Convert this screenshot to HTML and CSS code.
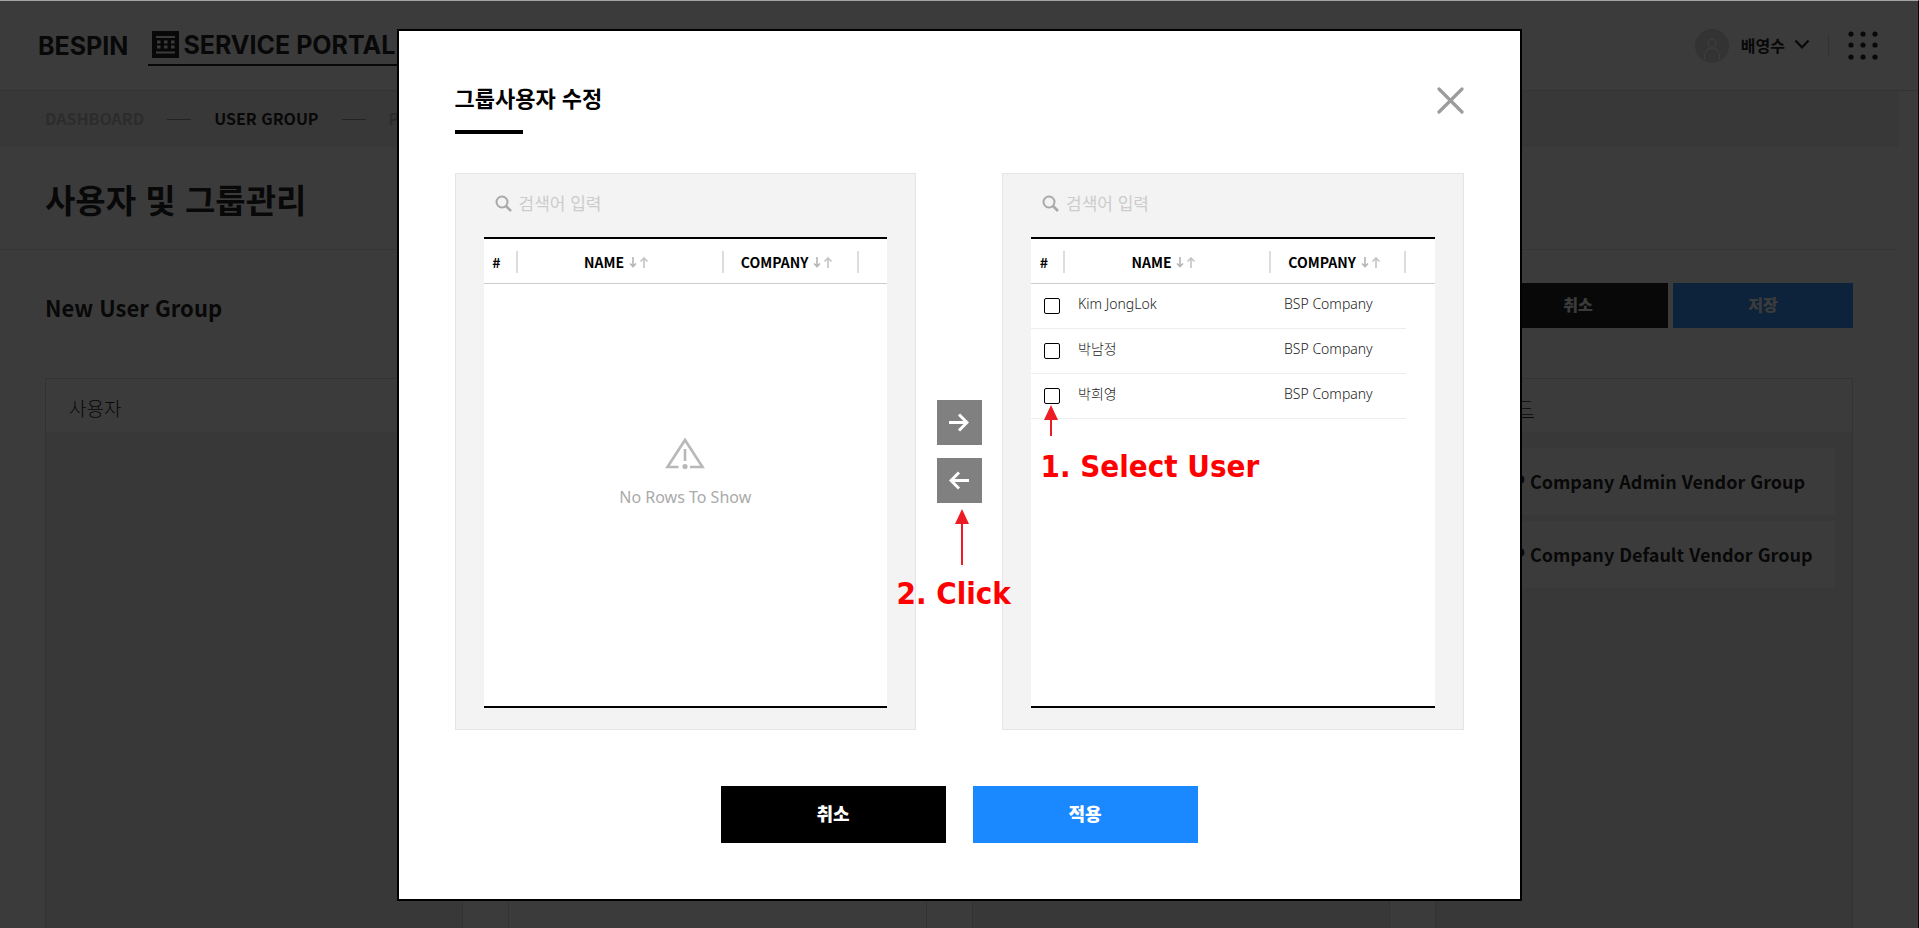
FILE: index.html
```html
<!DOCTYPE html>
<html lang="ko">
<head>
<meta charset="utf-8">
<title>사용자 및 그룹관리</title>
<meta name="viewport" content="width=device-width, initial-scale=1">
<link rel="stylesheet" href="styles.css">
</head>
<body>
<div class="page">
  <header class="header">
    <a class="brand" href="#">BESPIN</a>
    <a class="portal" href="#">
      <svg width="27" height="27" viewBox="0 0 27 27" aria-hidden="true">
        <rect width="27" height="27" fill="#000"/>
        <path d="M4 6h19M4 21.500h19" stroke="#fff" stroke-width="2"/>
        <path d="M5 11h3.500M12 11h3.500M19 11h3.500M5 16h3.500M12 16h3.500M19 16h3.500" stroke="#fff" stroke-width="3"/>
      </svg>
      <span>SERVICE PORTAL</span>
    </a>
    <div class="account">
      <svg class="avatar" width="34" height="34" viewBox="0 0 34 34" aria-hidden="true">
        <circle cx="17" cy="17" r="17" fill="#d4d4d4"/>
        <g fill="none" stroke="#fff" stroke-width="1.400"><circle cx="17" cy="14" r="4"/><path d="M9.500 31v-4.500a7.500 7.500 0 0 1 15 0V31"/></g>
      </svg>
      <button class="user" type="button">배영수
        <svg width="16" height="11" viewBox="0 0 16 11" aria-hidden="true"><path d="M1.500 1.500L8 8.500l6.500-7" fill="none" stroke="#000" stroke-width="2.200"/></svg>
      </button>
      <button class="apps" type="button" aria-label="메뉴">
        <svg width="30" height="30" viewBox="0 0 30 30" aria-hidden="true">
          <circle cx="3" cy="3" r="2.600"/><circle cx="15" cy="3" r="2.600"/><circle cx="27" cy="3" r="2.600"/>
          <circle cx="3" cy="14" r="2.600"/><circle cx="15" cy="14" r="2.600"/><circle cx="27" cy="14" r="2.600"/>
          <circle cx="3" cy="26" r="2.600"/><circle cx="15" cy="26" r="2.600"/><circle cx="27" cy="26" r="2.600"/>
        </svg>
      </button>
    </div>
  </header>
  <div class="content">
    <nav class="crumbs">
      <a href="#">DASHBOARD</a>
      <a class="current" href="#">USER GROUP</a>
      <a href="#">PROJECT</a>
    </nav>
    <h1 class="title">사용자 및 그룹관리</h1>
    <div class="toolbar">
      <h2>New User Group</h2>
      <div class="actions">
        <button class="btn" type="button">취소</button>
        <button class="btn primary" type="button">저장</button>
      </div>
    </div>
    <div class="columns">
      <section class="column"><h3>사용자</h3><div class="list"></div></section>
      <section class="column"><h3>그룹</h3><div class="list plain"></div></section>
      <section class="column"><h3>역할</h3><div class="list"></div></section>
      <section class="column"><h3><a href="#">권한 카드</a></h3>
        <div class="list">
          <div class="card">BSP Company Admin Vendor Group</div>
          <div class="card">BSP Company Default Vendor Group</div>
        </div>
      </section>
    </div>
  </div>
</div>

<div class="overlay">
  <div class="modal" role="dialog" aria-modal="true" aria-labelledby="dlg-title">
    <div class="modal-head">
      <h2 id="dlg-title">그룹사용자 수정</h2>
      <button class="close" type="button" aria-label="닫기">
        <svg width="27" height="27" viewBox="0 0 27 27" aria-hidden="true"><path d="M2 2l23 23M25 2L2 25" stroke="#9c9c9c" stroke-width="3.200" stroke-linecap="round"/></svg>
      </button>
    </div>
    <div class="picker">
      <section class="pane">
        <label class="search">
          <svg width="17" height="17" viewBox="0 0 17 17" aria-hidden="true"><g fill="none" stroke="#a9a9a9" stroke-width="2"><circle cx="7" cy="7" r="5.500"/><path d="M11 11l5 5" stroke-width="2.600"/></g></svg>
          <input type="text" placeholder="검색어 입력" aria-label="검색어 입력">
        </label>
        <div class="grid">
          <table>
            <thead><tr>
              <th class="c-num">#</th>
              <th class="c-name">NAME <svg class="sort" width="20" height="11" viewBox="0 0 20 11" aria-hidden="true"><path d="M4 0v10M1 6.500l3 3 3-3"/><path class="up" d="M15 11V1M11.500 4.500l3.500-3.500 3.500 3.500"/></svg></th>
              <th class="c-company">COMPANY <svg class="sort" width="20" height="11" viewBox="0 0 20 11" aria-hidden="true"><path d="M4 0v10M1 6.500l3 3 3-3"/><path class="up" d="M15 11V1M11.500 4.500l3.500-3.500 3.500 3.500"/></svg></th>
              <th class="c-rest"></th>
            </tr></thead>
          </table>
          <div class="empty">
            <svg width="40" height="32" viewBox="0 0 40 32" aria-hidden="true"><g fill="none" stroke="#b8b8b8" stroke-width="2.600"><path d="M13.500 30H2.500L20 3l17.500 27H25"/><path d="M20 12v12"/></g><circle cx="20" cy="29.500" r="2.600" fill="#b8b8b8"/></svg>
            <p>No Rows To Show</p>
          </div>
        </div>
      </section>
      <div class="movers">
        <button type="button" aria-label="오른쪽으로 이동"><svg width="20" height="19" viewBox="0 0 20 19" aria-hidden="true"><path d="M0 9.500h18M10 1.500l8 8-8 8"/></svg></button>
        <button type="button" aria-label="왼쪽으로 이동"><svg width="20" height="19" viewBox="0 0 20 19" aria-hidden="true"><path d="M20 9.500H2M10 1.500l-8 8 8 8"/></svg></button>
      </div>
      <section class="pane">
        <label class="search">
          <svg width="17" height="17" viewBox="0 0 17 17" aria-hidden="true"><g fill="none" stroke="#a9a9a9" stroke-width="2"><circle cx="7" cy="7" r="5.500"/><path d="M11 11l5 5" stroke-width="2.600"/></g></svg>
          <input type="text" placeholder="검색어 입력" aria-label="검색어 입력">
        </label>
        <div class="grid">
          <table>
            <thead><tr>
              <th class="c-num">#</th>
              <th class="c-name">NAME <svg class="sort" width="20" height="11" viewBox="0 0 20 11" aria-hidden="true"><path d="M4 0v10M1 6.500l3 3 3-3"/><path class="up" d="M15 11V1M11.500 4.500l3.500-3.500 3.500 3.500"/></svg></th>
              <th class="c-company">COMPANY <svg class="sort" width="20" height="11" viewBox="0 0 20 11" aria-hidden="true"><path d="M4 0v10M1 6.500l3 3 3-3"/><path class="up" d="M15 11V1M11.500 4.500l3.500-3.500 3.500 3.500"/></svg></th>
              <th class="c-rest"></th>
            </tr></thead>
            <tbody>
              <tr><td class="pick"><input type="checkbox" aria-label="Kim JongLok"></td><td>Kim JongLok</td><td>BSP Company</td><td></td></tr>
              <tr><td class="pick"><input type="checkbox" aria-label="박남정"></td><td>박남정</td><td>BSP Company</td><td></td></tr>
              <tr><td class="pick"><input type="checkbox" aria-label="박희영"></td><td>박희영</td><td>BSP Company</td><td></td></tr>
            </tbody>
          </table>
        </div>
      </section>
    </div>
    <div class="modal-foot">
      <button class="btn" type="button">취소</button>
      <button class="btn primary" type="button">적용</button>
    </div>
    <div class="note note-select">
      <svg width="16" height="32" viewBox="0 0 16 32" aria-hidden="true"><path d="M8 0l7 15H9v16H7V15H1z" fill="#ed1c24"/></svg>
      <span>1. Select User</span>
    </div>
    <div class="note note-click">
      <svg width="16" height="56" viewBox="0 0 16 56" aria-hidden="true"><path d="M8 0l7 15H9v41H7V15H1z" fill="#ed1c24"/></svg>
      <span>2. Click</span>
    </div>
  </div>
</div>
</body>
</html>
```
FILE: styles.css
```css
* { box-sizing: border-box; }
html, body { margin: 0; height: 100%; overflow: hidden; }
body { font-family: "Noto Sans CJK KR", sans-serif; color: #000; background: #fff; font-size: 16px; }
h1, h2, h3, p { margin: 0; }
a { color: inherit; text-decoration: none; }
button { font: inherit; color: inherit; border: 0; padding: 0; background: none; cursor: pointer; }
svg { display: block; }

.page { display: flex; flex-direction: column; height: 100%; padding-top: 1px; }
.header { display: flex; align-items: center; height: 90px; padding: 0 41px 0 38px; border-bottom: 1px solid #d4d4d4; }
.brand, .portal { font-family: Inter, sans-serif; font-weight: 700; font-size: 25px; line-height: 28px; white-space: nowrap; }
.portal { display: flex; align-items: center; gap: 4px; margin-left: 20px; padding: 5px 12px 5px 4px; border-bottom: 2px solid #000; }
.account { display: flex; align-items: center; margin-left: auto; }
.user { display: flex; align-items: center; gap: 9px; height: 22px; margin-left: 12px; padding: 0 18px 2px 0; border-right: 1px solid #d0d0d0; font-weight: 700; }
.apps { margin-left: 19px; }

.content { display: flex; flex-direction: column; flex: 1; margin-right: 21px; min-height: 0; }
.crumbs { display: flex; align-items: center; height: 56px; padding: 0 45px 2px; background: #eee; font-weight: 700; color: #b4b4b4; }
.crumbs .current { color: #000; }
.crumbs a + a::before { content: ""; display: inline-block; width: 24px; height: 1px; margin: 0 23px; vertical-align: 5px; background: #888; }
.title { padding: 27px 45px 0; height: 103px; border-bottom: 1px solid #e0e0e0; font-size: 33px; line-height: 50px; font-weight: 700; }
.toolbar { display: flex; justify-content: space-between; align-items: flex-start; padding: 33px 45px 0; }
.toolbar h2 { padding-top: 3px; font-size: 22px; line-height: 42px; font-weight: 700; }
.actions { display: flex; gap: 5px; }
.btn { padding-bottom: 3px; background: #000; color: #fff; font-weight: 900; }
.btn.primary { background: #1a88ff; }
.actions .btn { width: 180px; height: 45px; }
.columns { display: grid; grid-template-columns: repeat(4, 1fr); gap: 45px; flex: 1; padding: 50px 45px 0; }
.column { display: flex; flex-direction: column; border: 1px solid #d8d8d8; border-bottom: 0; }
.column h3 { padding: 6px 23px 0; height: 53px; font-size: 19px; line-height: 45px; font-weight: 300; }
.column h3 a { text-decoration: underline; text-decoration-thickness: 1px; text-underline-offset: 1px; }
.list { display: flex; flex-direction: column; gap: 6px; flex: 1; padding: 16px 17px; background: #f0f0f0; }
.list.plain { background: #fff; }
.card { height: 67px; padding-left: 37px; background: #fff; font-size: 18px; line-height: 67px; font-weight: 700; white-space: nowrap; }

.overlay { position: fixed; inset: 0; display: flex; justify-content: center; align-items: flex-start; padding-top: 28px; background: rgba(10, 10, 10, .8); border-top: 1px solid #a5a5a5; border-right: 1px solid #000; }
.modal { position: relative; width: 1125px; max-width: 96%; padding: 48px 56px 56px; border: 2px solid #000; background: #fff; }
.modal-head { display: flex; justify-content: space-between; align-items: flex-start; }
.modal-head h2 { font-size: 22px; line-height: 36px; font-weight: 700; }
.modal-head h2::after { content: ""; display: block; width: 68px; height: 4px; margin-top: 15px; background: #000; }
.close { margin-top: 8px; }
.picker { display: grid; grid-template-columns: 1fr 86px 1fr; margin-top: 39px; }
.pane { padding: 9px 28px 21px; border: 1px solid #e5e5e5; background: #f3f3f3; }
.search { display: flex; align-items: center; gap: 7px; height: 40px; padding-left: 11px; margin-bottom: 14px; }
.search input { flex: 1; min-width: 0; border: 0; padding: 0 0 2px; outline: 0; background: none; font: inherit; font-size: 17px; }
.search input::placeholder { color: #ccc; opacity: 1; }
.grid { display: flex; flex-direction: column; min-height: 471px; border-top: 2px solid #000; border-bottom: 2px solid #000; background: #fff; }
table { width: 100%; border-collapse: collapse; table-layout: fixed; font-size: 14px; }
th { position: relative; height: 44px; padding: 2px 8px 0 0; border-bottom: 1px solid #ccc; font-weight: 700; line-height: 20px; }
th:not(.c-rest)::after { content: ""; position: absolute; right: 0; top: 12px; width: 2px; height: 22px; background: #ddd; }
.c-num { width: 34px; }
.c-name { width: 206px; }
.c-company { width: 135px; }
.sort { display: inline-block; margin-left: 1px; fill: none; stroke: #b5b5b5; stroke-width: 1.6; }
.sort .up { stroke: #c4c4c4; }
td { height: 45px; padding: 0 13px 4px; border-bottom: 1px solid #eee; font-family: "Noto Sans", "Noto Sans CJK KR", sans-serif; font-weight: 300; line-height: 20px; color: #222; }
td:last-child { border-bottom: 0; }
.pick { padding: 0 0 0 13px; }
.pick input { display: block; appearance: none; width: 16px; height: 16px; margin: 0; border: 1px solid #000; border-radius: 2px; background: #fff; }
.empty { display: flex; flex-direction: column; align-items: center; justify-content: center; flex: 1; gap: 16px; padding-bottom: 44px; color: #aaa; font-family: "Noto Sans", sans-serif; line-height: 24px; }
.movers { display: flex; flex-direction: column; align-items: center; justify-content: center; gap: 13px; padding-bottom: 1px; }
.movers button { display: flex; align-items: center; justify-content: center; width: 45px; height: 45px; background: #808080; }
.movers svg { fill: none; stroke: #fff; stroke-width: 3; }
.modal-foot { display: flex; justify-content: center; gap: 27px; margin-top: 56px; }
.modal-foot .btn { width: 225px; height: 57px; font-size: 18px; }
.note { position: absolute; display: flex; flex-direction: column; color: #f00; font-family: "DejaVu Sans Condensed", "DejaVu Sans", sans-serif; font-weight: 700; font-size: 31px; line-height: 36px; white-space: nowrap; }
.note-select { left: 642px; top: 374px; gap: 11px; }
.note-select svg { margin-left: 2px; }
.note-click { left: 498px; top: 478px; gap: 10px; }
.note-click svg { margin-left: 57px; }
```
